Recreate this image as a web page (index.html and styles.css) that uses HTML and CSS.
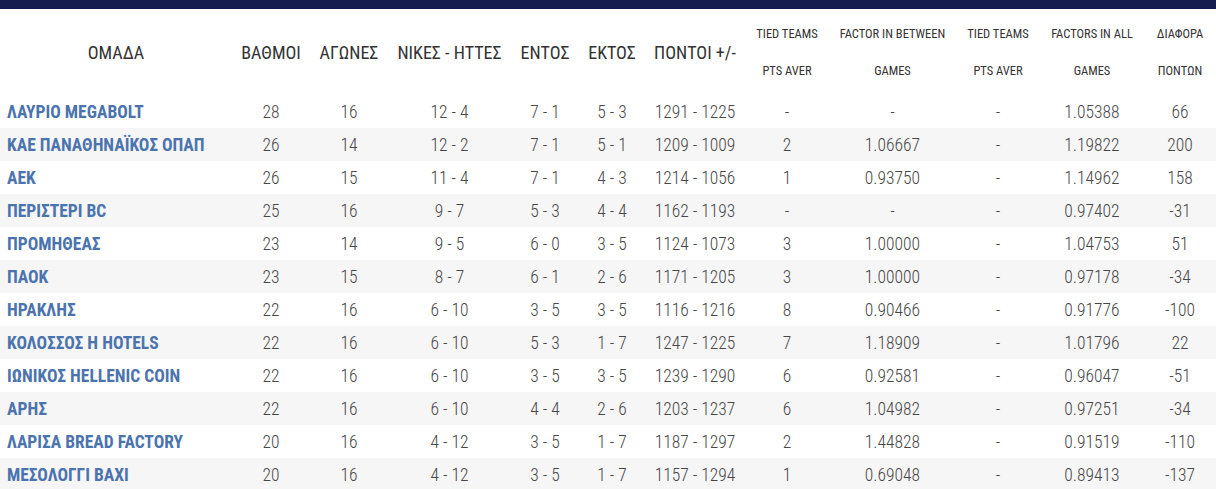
FILE: index.html
```html
<!DOCTYPE html>
<html lang="el">
<head>
<meta charset="utf-8">
<title>Βαθμολογία</title>
<link rel="stylesheet" href="styles.css">
</head>
<body>
<div class="topbar"></div>
<table class="standings">
  <colgroup>
    <col class="c-team"><col class="c-pts"><col class="c-gp"><col class="c-wl"><col class="c-home"><col class="c-away"><col class="c-score"><col class="c-t1"><col class="c-f1"><col class="c-t2"><col class="c-f2"><col class="c-diff">
  </colgroup>
  <thead>
    <tr>
      <th>ΟΜΑΔΑ</th>
      <th>ΒΑΘΜΟΙ</th>
      <th>ΑΓΩΝΕΣ</th>
      <th>ΝΙΚΕΣ - ΗΤΤΕΣ</th>
      <th>ΕΝΤΟΣ</th>
      <th>ΕΚΤΟΣ</th>
      <th>ΠΟΝΤΟΙ +/-</th>
      <th class="small">TIED TEAMS<br>PTS AVER</th>
      <th class="small">FACTOR IN BETWEEN<br>GAMES</th>
      <th class="small">TIED TEAMS<br>PTS AVER</th>
      <th class="small">FACTORS IN ALL<br>GAMES</th>
      <th class="small">ΔΙΑΦΟΡΑ<br>ΠΟΝΤΩΝ</th>
    </tr>
  </thead>
  <tbody>
    <tr><td class="team">ΛΑΥΡΙΟ MEGABOLT</td><td>28</td><td>16</td><td>12 - 4</td><td>7 - 1</td><td>5 - 3</td><td>1291 - 1225</td><td>-</td><td>-</td><td>-</td><td>1.05388</td><td>66</td></tr>
    <tr><td class="team">ΚΑΕ ΠΑΝΑΘΗΝΑΪΚΟΣ ΟΠΑΠ</td><td>26</td><td>14</td><td>12 - 2</td><td>7 - 1</td><td>5 - 1</td><td>1209 - 1009</td><td>2</td><td>1.06667</td><td>-</td><td>1.19822</td><td>200</td></tr>
    <tr><td class="team">ΑΕΚ</td><td>26</td><td>15</td><td>11 - 4</td><td>7 - 1</td><td>4 - 3</td><td>1214 - 1056</td><td>1</td><td>0.93750</td><td>-</td><td>1.14962</td><td>158</td></tr>
    <tr><td class="team">ΠΕΡΙΣΤΕΡΙ BC</td><td>25</td><td>16</td><td>9 - 7</td><td>5 - 3</td><td>4 - 4</td><td>1162 - 1193</td><td>-</td><td>-</td><td>-</td><td>0.97402</td><td>-31</td></tr>
    <tr><td class="team">ΠΡΟΜΗΘΕΑΣ</td><td>23</td><td>14</td><td>9 - 5</td><td>6 - 0</td><td>3 - 5</td><td>1124 - 1073</td><td>3</td><td>1.00000</td><td>-</td><td>1.04753</td><td>51</td></tr>
    <tr><td class="team">ΠΑΟΚ</td><td>23</td><td>15</td><td>8 - 7</td><td>6 - 1</td><td>2 - 6</td><td>1171 - 1205</td><td>3</td><td>1.00000</td><td>-</td><td>0.97178</td><td>-34</td></tr>
    <tr><td class="team">ΗΡΑΚΛΗΣ</td><td>22</td><td>16</td><td>6 - 10</td><td>3 - 5</td><td>3 - 5</td><td>1116 - 1216</td><td>8</td><td>0.90466</td><td>-</td><td>0.91776</td><td>-100</td></tr>
    <tr><td class="team">ΚΟΛΟΣΣΟΣ H HOTELS</td><td>22</td><td>16</td><td>6 - 10</td><td>5 - 3</td><td>1 - 7</td><td>1247 - 1225</td><td>7</td><td>1.18909</td><td>-</td><td>1.01796</td><td>22</td></tr>
    <tr><td class="team">ΙΩΝΙΚΟΣ HELLENIC COIN</td><td>22</td><td>16</td><td>6 - 10</td><td>3 - 5</td><td>3 - 5</td><td>1239 - 1290</td><td>6</td><td>0.92581</td><td>-</td><td>0.96047</td><td>-51</td></tr>
    <tr><td class="team">ΑΡΗΣ</td><td>22</td><td>16</td><td>6 - 10</td><td>4 - 4</td><td>2 - 6</td><td>1203 - 1237</td><td>6</td><td>1.04982</td><td>-</td><td>0.97251</td><td>-34</td></tr>
    <tr><td class="team">ΛΑΡΙΣΑ BREAD FACTORY</td><td>20</td><td>16</td><td>4 - 12</td><td>3 - 5</td><td>1 - 7</td><td>1187 - 1297</td><td>2</td><td>1.44828</td><td>-</td><td>0.91519</td><td>-110</td></tr>
    <tr><td class="team">ΜΕΣΟΛΟΓΓΙ ΒΑΧΙ</td><td>20</td><td>16</td><td>4 - 12</td><td>3 - 5</td><td>1 - 7</td><td>1157 - 1294</td><td>1</td><td>0.69048</td><td>-</td><td>0.89413</td><td>-137</td></tr>
  </tbody>
</table>
</body>
</html>
```
FILE: styles.css
```css
html, body {
  margin: 0;
  padding: 0;
  background: #ffffff;
}
body {
  font-family: Roboto, "Liberation Sans", sans-serif;
  font-stretch: 75%;
  color: #3a3a3a;
  overflow: hidden;
}
.topbar {
  height: 9px;
  background: #151c4e;
}
.standings {
  width: 1216px;
  border-collapse: collapse;
  table-layout: fixed;
}
.c-team { width: 232px; }
.c-pts { width: 78px; }
.c-gp { width: 78px; }
.c-wl { width: 123px; }
.c-home { width: 68px; }
.c-away { width: 66px; }
.c-score { width: 100px; }
.c-t1 { width: 84px; }
.c-f1 { width: 127px; }
.c-t2 { width: 84px; }
.c-f2 { width: 104px; }
.c-diff { width: 72px; }

.standings th {
  height: 86px;
  padding: 0;
  font-weight: 400;
  font-size: 18px;
  color: #333;
  text-align: center;
  vertical-align: middle;
  white-space: nowrap;
}
.standings th.small {
  font-size: 12.5px;
  line-height: 37px;
}
.standings td {
  height: 33px;
  padding: 0;
  font-size: 17.5px;
  font-weight: 300;
  color: #474747;
  text-align: center;
  vertical-align: middle;
  white-space: nowrap;
}
.standings td.team {
  text-align: left;
  padding-left: 7px;
  font-size: 17.5px;
  font-weight: 700;
  color: #4b74ae;
}
.standings tbody tr:nth-child(even) td {
  background: #f7f6f7;
}
```
